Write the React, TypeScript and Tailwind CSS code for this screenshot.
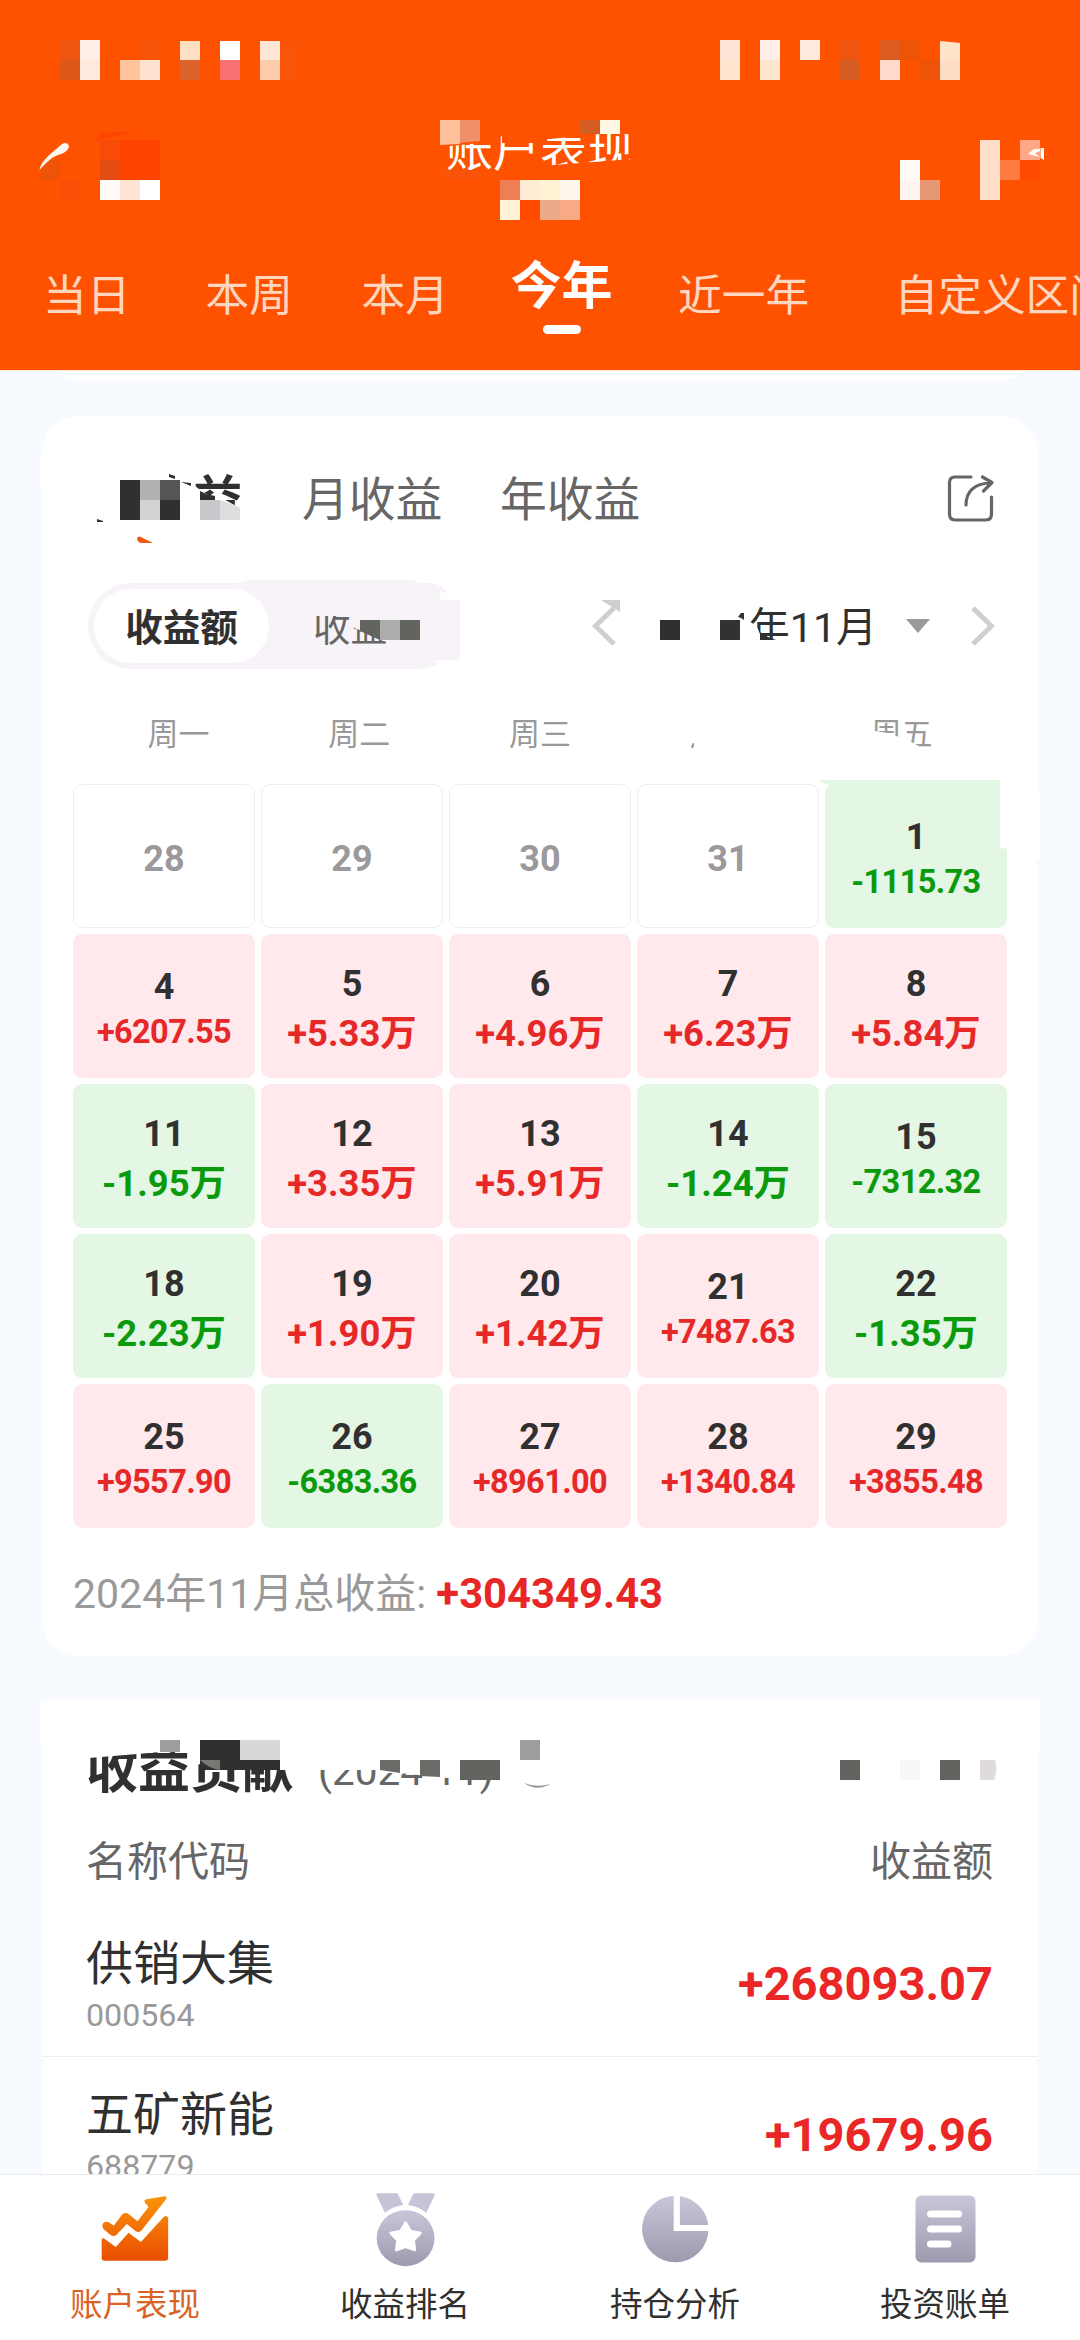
import type { ReactNode } from "react";

type Cell = [x: number, y: number, w: number, h: number, fill: string];

/** Censoring layer: flat blocks and patches drawn over a section, in page pixels. */
function Mosaic({ top, height, children, cells }: { top: number; height: number; children?: ReactNode; cells: Cell[] }) {
  return (
    <svg
      className="pointer-events-none absolute left-0 top-0"
      width={1080}
      height={height}
      viewBox={`0 ${top} 1080 ${height}`}
      shapeRendering="geometricPrecision"
    >
      {children}
      {cells.map(([x, y, w, h, fill], i) => (
        <rect key={i} x={x} y={y} width={w} height={h} fill={fill} />
      ))}
    </svg>
  );
}

const headerCells: Cell[] = [
  [60, 40, 20, 20, "#ee5511"], [60, 60, 20, 20, "#dd5718"],
  [80, 40, 20, 20, "#ffeee6"], [80, 60, 20, 20, "#ffe9dc"],
  [140, 40, 20, 20, "#f85408"], [120, 60, 20, 20, "#ffc49b"], [140, 60, 20, 20, "#ffe1d0"],
  [180, 41, 20, 19, "#ffdfc2"], [180, 60, 20, 20, "#dd632b"],
  [220, 41, 20, 19, "#ffffff"], [220, 60, 20, 20, "#f8706f"],
  [260, 41, 20, 19, "#ffe6d6"], [260, 60, 20, 20, "#ffcca9"], [280, 42, 20, 38, "#f95408"],
  [720, 40, 20, 20, "#ffe5d6"], [720, 60, 20, 20, "#ffe5cd"],
  [760, 40, 20, 20, "#ffeee8"], [760, 60, 20, 20, "#ffe5cd"],
  [800, 40, 20, 20, "#ffe9dc"],
  [840, 40, 20, 20, "#ee5511"], [840, 60, 20, 20, "#d55d22"],
  [880, 40, 20, 20, "#dd5c20"], [900, 40, 20, 20, "#ee5408"], [880, 60, 20, 20, "#ffdacb"],
  [920, 60, 20, 20, "#ee5408"], [940, 60, 20, 20, "#ffdcc6"],
  [60, 180, 20, 20, "#fa4f08"],
  [100, 140, 20, 20, "#f84a08"], [120, 140, 40, 40, "#ff4400"], [100, 160, 20, 20, "#e54c11"],
  [100, 180, 20, 20, "#fffcf7"], [120, 180, 20, 20, "#ffe5d6"], [140, 180, 20, 20, "#ffffff"],
  [580, 120, 20, 14, "#d55d22"], [600, 120, 20, 14, "#fff8e5"],
  [500, 180, 20, 20, "#ee7f54"], [520, 180, 20, 20, "#ffecd5"], [540, 180, 20, 20, "#fff2d5"], [560, 180, 20, 20, "#fff6ed"],
  [500, 200, 20, 20, "#fff2d5"], [520, 200, 20, 20, "#ff4a00"], [540, 200, 20, 20, "#edaa88"], [560, 200, 20, 20, "#f7aa84"],
  [900, 160, 20, 20, "#fffcf8"], [900, 180, 20, 20, "#fff5ee"], [920, 180, 20, 20, "#e59873"],
  [980, 140, 20, 60, "#ffdec8"], [1000, 160, 20, 20, "#ff7b40"], [1020, 140, 20, 20, "#ffa887"], [1020, 160, 20, 20, "#ff4a00"],
];

const earningsCells: Cell[] = [
  [120, 480, 20, 40, "#303030"], [140, 480, 20, 20, "#b2b0b3"], [140, 500, 20, 20, "#d4d2d5"],
  [160, 480, 20, 20, "#555555"], [160, 500, 20, 20, "#303030"],
  [200, 500, 20, 20, "#cac8cc"],
  [380, 620, 20, 20, "#adadad"], [400, 620, 20, 20, "#62655f"],
  [660, 620, 20, 20, "#303030"], [720, 620, 20, 20, "#303330"],
];

const contributionCells: Cell[] = [
  [160, 1740, 20, 12, "#9d9d9d"],
  [200, 1740, 40, 30, "#303030"], [240, 1740, 40, 20, "#d8d8d8"], [240, 1760, 40, 10, "#303030"],
  [460, 1760, 40, 20, "#62655f"], [520, 1740, 20, 20, "#9d9d9d"],
  [840, 1760, 20, 20, "#62655f"], [900, 1760, 20, 20, "#f7f7f7"], [940, 1760, 20, 20, "#62655f"],
];

function Header() {
  const idle = "shrink-0 text-[43.7px] leading-[60px] text-[#ffd6c0] whitespace-nowrap";
  return (
    <header className="relative flex h-[370px] shrink-0 flex-col overflow-hidden bg-[#ff5200]">
      <div className="h-[110px]" />
      <h1 className="h-[84px] text-center text-[47px] leading-[80px] text-white">账户表现</h1>
      <nav className="flex h-[176px] items-start overflow-hidden pl-[43px] pt-[72px]">
        <span className={`${idle} w-[162.5px]`}>当日</span>
        <span className={`${idle} w-[156px]`}>本周</span>
        <span className={`${idle} w-[149px]`}>本月</span>
        <span className="-mt-[9px] flex w-[167.5px] shrink-0 flex-col text-[51px] font-bold leading-[60px] text-white">
          今年
          <i className="ml-[32px] mt-[8px] h-[9px] w-[38px] rounded-full bg-white" />
        </span>
        <span className={`${idle} w-[216.5px]`}>近一年</span>
        <span className={idle}>自定义区间</span>
      </nav>
      <Mosaic top={0} height={370} cells={headerCells}>
        <path d="M436 116H480V143L440 147ZM480 116H576V137H540V143H502V136L480 143Z" fill="#ff5200" />
        <path d="M576 116H640V134H600L540 140Z" fill="#ff5200" />
        <path d="M540 166L580 163L634 159V176H540Z" fill="#ff5200" />
        <rect x={440} y={170} width={40} height={10} fill="#f95408" />
        <path d="M440 120H460V144L440 145Z" fill="#ffc199" />
        <path d="M460 120H480V141L460 143Z" fill="#ef906a" />
        <path d="M40 170L50 160H60V180H40Z" fill="#ee5408" />
        <path d="M39.500 170C41 160 52 153 62 144C65 142 69 143 69 147C67 154 58 154 52 158C47 162 43 166 39.500 170Z" fill="#fff8f0" />
        <path d="M93 141L102 133L134 131L106 139Z" fill="#ff4400" />
        <path d="M940 41L960 43V60H940Z" fill="#ffe3cb" />
      </Mosaic>
      <svg className="pointer-events-none absolute left-[1020px] top-[140px]" width={26} height={22} viewBox="0 0 26 22">
        <path d="M0 10L13 14L20 17V20H14Z" fill="#ffa887" />
        <path d="M0 11L20 19V20H0Z" fill="#ffa887" />
        <path d="M8 14L14 9H20V11L15 13L17 15L20 17Z" fill="#ffffff" />
        <path d="M20.500 8H24V20L20.500 18Z" fill="#ffffff" />
      </svg>
    </header>
  );
}

const days: [string, string?][] = [
  ["28"], ["29"], ["30"], ["31"], ["1", "-1115.73"],
  ["4", "+6207.55"], ["5", "+5.33万"], ["6", "+4.96万"], ["7", "+6.23万"], ["8", "+5.84万"],
  ["11", "-1.95万"], ["12", "+3.35万"], ["13", "+5.91万"], ["14", "-1.24万"], ["15", "-7312.32"],
  ["18", "-2.23万"], ["19", "+1.90万"], ["20", "+1.42万"], ["21", "+7487.63"], ["22", "-1.35万"],
  ["25", "+9557.90"], ["26", "-6383.36"], ["27", "+8961.00"], ["28", "+1340.84"], ["29", "+3855.48"],
];

function DayCell({ day, value }: { day: string; value?: string }) {
  const base = "flex h-[144px] flex-col items-center justify-center rounded-[9px] text-[36px] font-bold";
  if (!value) {
    return <div className={`${base} border border-[#eeeeee] pt-[6px] leading-[48px] text-[#9b999b]`}>{day}</div>;
  }
  const loss = value.startsWith("-");
  const short = value.endsWith("万");
  return (
    <div className={`${base} ${loss ? "bg-[#e4f6e4]" : "bg-[#ffe9ec]"} ${short ? "pt-[6px] leading-[49px]" : "pt-[7px] leading-[45px]"}`}>
      <span className="text-[#303030]">{day}</span>
      <span className={`${loss ? "text-[#0a9a0c]" : "text-[#e62828]"} ${short ? "text-[36.4px]" : "text-[32.500px] tracking-[-0.6px]"}`}>{value}</span>
    </div>
  );
}

function EarningsCard() {
  return (
    <section className="mx-[42px] mt-[36px] flex h-[1240px] w-[995px] shrink-0 flex-col rounded-[36px] bg-white pl-[31px] pr-[30px]">
      <div className="flex h-[167px] items-center pl-[21px] pt-[1px] text-[46.8px] text-[#666666]">
        <span className="w-[208px] text-[49.500px] font-bold text-[#303030]">日收益</span>
        <span className="w-[198px]">月收益</span>
        <span className="flex-1">年收益</span>
        <svg className="mb-[5px] mr-[12px]" width={48} height={50} viewBox="0 0 48 50" fill="none" stroke="#666666" strokeWidth={3.2} strokeLinecap="round" strokeLinejoin="round">
          <path d="M24 4H8Q2.500 4 2.500 9.500V41Q2.500 47 8 47H39Q44.500 47 44.500 41V24" />
          <path d="M19 32C19 19 27 10 44 10M35.500 4L45 9.500L36.500 18" />
        </svg>
      </div>
      <div className="flex h-[86px] items-center">
        <div className="ml-[15px] flex h-[86px] w-[372px] items-center rounded-full bg-[#f7f3f8] pl-[6px] text-[37.6px]">
          <span className="flex h-[74px] w-[175px] items-center justify-center rounded-full bg-white pt-[4px] font-bold text-[#303030]">收益额</span>
          <span className="ml-[44px] pt-[5px] text-[#666666]">收益率</span>
        </div>
        <svg className="ml-[131px]" width={26} height={44} viewBox="0 0 26 44" fill="none" stroke="#cfcfcf" strokeWidth={5}>
          <path d="M23 4L4.500 22L23 40" />
        </svg>
        <span className="ml-[39px] w-[221px] whitespace-nowrap pt-[5px] text-[41.2px] text-[#303030]">2024年11月</span>
        <svg className="ml-[28px]" width={26} height={16} viewBox="0 0 26 16">
          <path d="M1 1H25L13 15Z" fill="#9b999b" />
        </svg>
        <svg className="ml-[39px]" width={26} height={44} viewBox="0 0 26 44" fill="none" stroke="#cfcfcf" strokeWidth={5}>
          <path d="M3 4L21.500 22L3 40" />
        </svg>
      </div>
      <div className="mx-[15px] mt-[36px] grid h-[79px] grid-cols-5 text-center text-[31px] leading-[60px] text-[#999999]">
        <span>周一</span><span>周二</span><span>周三</span><span>周四</span><span>周五</span>
      </div>
      <div className="grid grid-cols-5 gap-[6px]">
        {days.map(([day, value], i) => <DayCell key={i} day={day} value={value} />)}
      </div>
      <p className="mt-[36px] text-[41px] leading-[60px] text-[#999999]">
        2024年11月总收益: <b className="text-[41.800px] font-bold text-[#e92626]">+304349.43</b>
      </p>
    </section>
  );
}

const holdings = [
  { name: "供销大集", code: "000564", value: "+268093.07" },
  { name: "五矿新能", code: "688779", value: "+19679.96" },
];

function ContributionCard() {
  return (
    <section className="mx-[42px] mt-[44px] w-[995px] bg-white">
      <div className="flex h-[128px] items-center pl-[44px] pt-[14px]">
        <h2 className="text-[52px] font-bold text-[#303030]">收益贡献</h2>
        <span className="ml-[24px] text-[40.500px] text-[#666666]">(2024-11)</span>
      </div>
      <div className="flex h-[78px] items-center justify-between px-[44px] pb-[8px] text-[41px] text-[#666666]">
        <span>名称代码</span>
        <span>收益额</span>
      </div>
      {holdings.map((h) => (
        <div key={h.code} className="flex h-[151px] items-center justify-between border-b border-[#eeeeee] px-[44px]">
          <div className="flex flex-col pt-[8px]">
            <span className="text-[47px] leading-[60px] text-[#303030]">{h.name}</span>
            <span className="text-[32.200px] leading-[43px] text-[#999999]">{h.code}</span>
          </div>
          <span className="pt-[6px] text-[47px] font-bold text-[#eb2626]">{h.value}</span>
        </div>
      ))}
    </section>
  );
}

function NavItem({ label, active, children }: { label: string; active?: boolean; children: ReactNode }) {
  return (
    <div className={`flex flex-1 flex-col items-center text-[32.500px] leading-[44px] ${active ? "text-[#d96325]" : "text-[#303030]"}`}>
      <div className="flex h-[108px] items-start justify-center">{children}</div>
      {label}
    </div>
  );
}

function BottomNav() {
  return (
    <nav className="absolute bottom-0 left-0 flex h-[166px] w-full border-t border-[#ebebeb] bg-white">
      <NavItem label="账户表现" active>
        <svg className="mt-[20px]" width={68.2} height={66.7} viewBox="295 105 198 200" preserveAspectRatio="none">
          <defs>
            <linearGradient id="warm" gradientUnits="userSpaceOnUse" x1="0" y1="105" x2="0" y2="305">
              <stop offset="0" stopColor="#fa960a" />
              <stop offset="1" stopColor="#ea4c00" />
            </linearGradient>
          </defs>
          <g fill="url(#warm)">
            <path d="M320 188Q308 181 300 191Q296 199 302 207L323 225Q332 232 340 224L370 192L396 214Q405 220 413 211L485 116Q487 108 480 109L427 118Q418 121 422 127L433 141L401 184L376 163Q366 155 357 163L332 197Z" />
            <path d="M297 239Q298 232 305 236L338 261L375 218L411 246L477 171Q486 163 490 174V295Q490 302 483 302H304Q297 302 297 295Z" />
          </g>
        </svg>
      </NavItem>
      <NavItem label="收益排名">
        <svg className="ml-[2px] mt-[18px]" width={59.200} height={74} viewBox="1094 98 172 222" preserveAspectRatio="none">
          <defs>
            <linearGradient id="cool" x1="0" y1="0" x2="0" y2="1">
              <stop offset="0" stopColor="#c9c6da" />
              <stop offset="1" stopColor="#9c9aae" />
            </linearGradient>
          </defs>
          <path d="M1100 99H1153Q1157 99 1159 103L1173 134Q1144 138 1120 157L1096 106Q1094 99 1100 99ZM1260 99H1207Q1203 99 1201 103L1187 134Q1216 138 1240 157L1264 106Q1266 99 1260 99Z" fill="#c6c4d7" />
          <circle cx={1180} cy={233.500} r={84} fill="url(#cool)" />
          <path d="M1180 187L1194 212L1223 218L1203 240L1207 269L1180 259L1153 269L1157 240L1137 218L1166 212Z" fill="#fff" stroke="#fff" strokeWidth={8} strokeLinejoin="round" />
        </svg>
      </NavItem>
      <NavItem label="持仓分析">
        <svg className="ml-[1px] mt-[20px]" width={67} height={68} viewBox="0 0 67 68">
          <circle cx={33.300} cy={34} r={33.300} fill="url(#cool)" />
          <path d="M34.800 0V33H67" fill="none" stroke="#fff" strokeWidth={6.200} />
        </svg>
      </NavItem>
      <NavItem label="投资账单">
        <svg className="ml-[1px] mt-[20px]" width={61} height={68} viewBox="0 0 61 68">
          <rect x={0.500} y={0.500} width={60} height={67} rx={6} fill="url(#cool)" />
          <path d="M15.500 19H43.500M15.500 34H43.500M15.500 49H33" stroke="#fff" strokeWidth={7} strokeLinecap="round" />
        </svg>
      </NavItem>
    </nav>
  );
}

export default function App() {
  return (
    <div className="relative flex h-[2340px] w-[1080px] flex-col overflow-hidden bg-[#f7faff] font-['Roboto','Noto_Sans_CJK_SC',sans-serif]">
      <Header />
      <main className="relative flex flex-1 flex-col overflow-hidden">
        <div className="mx-[42px] h-[10px] w-[995px] shrink-0 overflow-hidden">
          <div className="-mt-[60px] h-[70px] rounded-[36px] bg-white" />
        </div>
        <EarningsCard />
        <ContributionCard />
        <Mosaic top={370} height={1970} cells={[...earningsCells, ...contributionCells]}>
          <rect x={0} y={370} width={1080} height={1} fill="#ffe9d2" />
          <path d="M42 455Q40 458 40 464V484Q40 488 42 492ZM1037 789L1040 792V860H1037Z" fill="#ffffff" />
          <path d="M88 462H193V486H195L203 492L215 499L222 498L236 506L246 509V534H88Z" fill="#ffffff" />
          <path d="M200 491L206 494L215 496V500H200Z" fill="#303030" />
          <path d="M220 500L237 506L240 508V520H220Z" fill="#dedede" />
          <path d="M169 474L175 476V479L169 477ZM97 519L103 521V522H97ZM181 482L191 483V486Z" fill="#303030" />
          <path d="M137 538Q139 535 143 538L153 543H141Q137 542 137 538Z" fill="#ee5a12" />
          <path d="M240 580H412L420 583H440V600H262L240 583Z" fill="#f7f3f8" />
          <path d="M240 580H248L240 583Z" fill="#ffffff" />
          <path d="M440 586L449 594L440 591V600H462V582H430Z" fill="#ffffff" />
          <path d="M440 585L449 594L440 591Z" fill="#f7f3f8" />
          <path d="M433 660H462V671H425L440 664Z" fill="#ffffff" />
          <rect x={438} y={600} width={22} height={60} fill="#f7f3f8" />
          <path d="M312 606H430V650H386V642L372 635L352 627V616H312Z" fill="#f7f3f8" />
          <path d="M360 620H380V640L360 631Z" fill="#62655f" />
          <path d="M601 600H620V612Z" fill="#cfcfcf" />
          <path d="M650 600H747V627H757L760 634L775 641L772 650H650Z" fill="#ffffff" />
          <path d="M738 617L741 613H744V620L741 618Z" fill="#303030" />
          <path d="M760 632L768 637L776 640H760Z" fill="#303030" />
          <path d="M685 715H755V755H694V743H685Z" fill="#ffffff" />
          <path d="M868 731H875L888 733L899 737V739L909 741L919 746V753H868Z" fill="#ffffff" />
          <path d="M820 780H1000V792H827Q827 787 830 785L820 782Z" fill="#e4f6e4" />
          <path d="M1000 778H1010V849L1006 849L1000 847Z" fill="#ffffff" />
          <path d="M40 1704Q40 1700 44 1700H1040V1750H1037V1720H42V1745L40 1742Z" fill="#ffffff" />
          <path d="M86 1730H200V1764L193 1762V1752L160 1752L137 1754L89 1758H86Z" fill="#ffffff" />
          <path d="M280 1730H300V1770H280ZM310 1745H380V1770H310ZM380 1745H510V1780H490L460 1779L436 1777L400 1773H380Z" fill="#ffffff" />
          <path d="M380 1760H400V1773L380 1770ZM420 1760H440V1777L420 1776Z" fill="#686b66" />
          <path d="M980 1760H995Q998 1770 994 1780H980Z" fill="#dedade" />
          <path d="M524 1783Q537 1788 550 1784Q537 1792 524 1783Z" fill="#999999" />
        </Mosaic>
        <svg className="pointer-events-none absolute left-[200px] top-[1390px]" width={20} height={10} viewBox="0 0 20 10">
          <path d="M0 0H20V10Q8 8 0 0Z" fill="#757873" />
        </svg>
      </main>
      <BottomNav />
    </div>
  );
}
